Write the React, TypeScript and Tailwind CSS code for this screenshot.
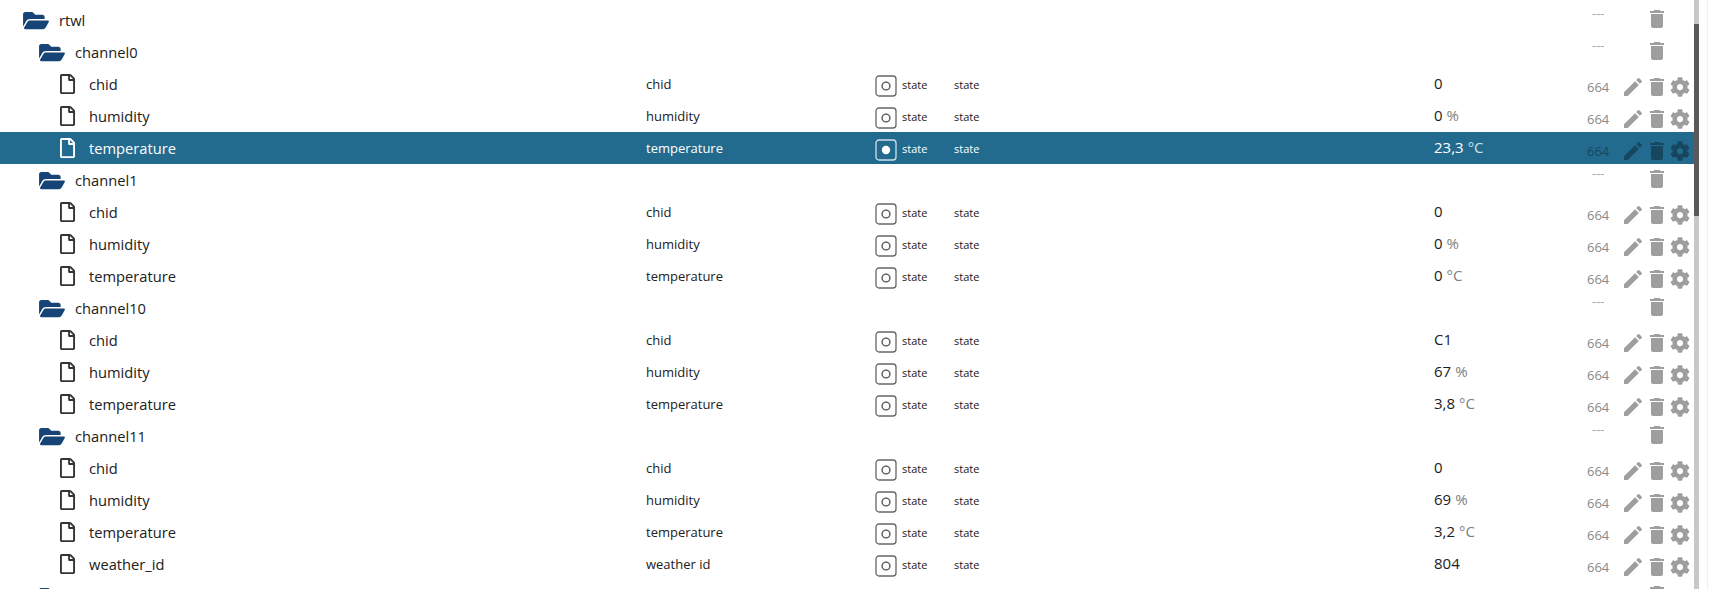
import { FaFolderOpen, FaRegFile, FaCog } from "react-icons/fa";
import { MdDelete, MdEdit } from "react-icons/md";

type Leaf = { name: string; label: string; value: string; unit?: string };

const channels: { name: string; rows: Leaf[] }[] = [
  {
    name: "channel0",
    rows: [
      { name: "chid", label: "chid", value: "0" },
      { name: "humidity", label: "humidity", value: "0", unit: "%" },
      { name: "temperature", label: "temperature", value: "23,3", unit: "°C" },
    ],
  },
  {
    name: "channel1",
    rows: [
      { name: "chid", label: "chid", value: "0" },
      { name: "humidity", label: "humidity", value: "0", unit: "%" },
      { name: "temperature", label: "temperature", value: "0", unit: "°C" },
    ],
  },
  {
    name: "channel10",
    rows: [
      { name: "chid", label: "chid", value: "C1" },
      { name: "humidity", label: "humidity", value: "67", unit: "%" },
      { name: "temperature", label: "temperature", value: "3,8", unit: "°C" },
    ],
  },
  {
    name: "channel11",
    rows: [
      { name: "chid", label: "chid", value: "0" },
      { name: "humidity", label: "humidity", value: "69", unit: "%" },
      { name: "temperature", label: "temperature", value: "3,2", unit: "°C" },
      { name: "weather_id", label: "weather id", value: "804" },
    ],
  },
];

const StateIcon = ({ active }: { active?: boolean }) => (
  <svg width="22" height="22" viewBox="0 0 22 22" className="mt-[4px] shrink-0">
    <rect
      x="1"
      y="1"
      width="20"
      height="20"
      rx="3"
      fill="none"
      stroke={active ? "#cfe0ea" : "#666666"}
      strokeWidth="1.3"
    />
    <circle
      cx="11"
      cy="11"
      r={active ? 4.2 : 3.9}
      fill={active ? "#ffffff" : "none"}
      stroke={active ? "#ffffff" : "#555555"}
      strokeWidth={active ? 0 : 1.4}
    />
  </svg>
);

// name is left out for the last row, the screenshot only shows the top of its folder
const FolderRow = ({ name, indent }: { name?: string; indent: string }) => (
  <div className={`flex h-8 items-center ${indent}`}>
    <FaFolderOpen className="h-[23px] w-[26px] shrink-0 text-[#164477]" />
    {name && <span className="ml-[10px] text-[14.7px] text-[#212121]">{name}</span>}
    <div className="ml-auto flex w-[102px] shrink-0 items-center">
      {name && <span className="mb-[13px] w-[53px] shrink-0 text-[13px] text-[#aaaaaa]">---</span>}
      <MdDelete className={`mb-[2px] h-6 w-6 shrink-0 text-[#9e9e9e] ${name ? "" : "ml-[53px]"}`} />
      <div className="w-[25px] shrink-0" />
    </div>
  </div>
);

const LeafRow = ({ row, selected }: { row: Leaf; selected?: boolean }) => {
  const text = selected ? "text-white" : "text-[#212121]";
  const icon = selected ? "text-[#17465f]" : "text-[#9e9e9e]";
  return (
    <div className={`flex h-8 items-center ${selected ? "bg-[#236b8e]" : ""}`}>
      <FaRegFile className={`ml-[60px] h-[20px] w-[15px] shrink-0 ${selected ? "text-white" : "text-[#333333]"}`} />
      <span className={`ml-[14px] w-[557px] shrink-0 text-[14.7px] ${text}`}>{row.name}</span>
      <span className={`mt-[2px] w-[229px] shrink-0 text-[13px] ${text}`}>{row.label}</span>
      <StateIcon active={selected} />
      <span className={`mt-[2px] ml-[5px] w-[52px] shrink-0 text-[11px] ${text}`}>state</span>
      <span className={`mt-[2px] w-[480px] shrink-0 text-[11px] ${text}`}>state</span>
      <span className={`mb-[2px] w-[153px] shrink-0 text-[15px] ${text}`}>
        {row.value}
        {row.unit && <span className={`ml-1 ${selected ? "text-[#cfe0ea]" : "text-[#808080]"}`}>{row.unit}</span>}
      </span>
      <span className={`mt-[8px] w-[34px] shrink-0 text-[13px] ${selected ? "text-[#17465f]" : "text-[#888888]"}`}>664</span>
      <MdEdit className={`mt-[6px] h-6 w-6 shrink-0 ${icon}`} />
      <MdDelete className={`mt-[6px] h-6 w-6 shrink-0 ${icon}`} />
      <FaCog className={`mt-[6px] ml-[1px] h-[20px] w-[20px] shrink-0 ${icon}`} />
    </div>
  );
};

export default function App() {
  return (
    <div className="flex h-[589px] overflow-hidden bg-white font-['Open_Sans','Noto_Sans',sans-serif]">
      <div className="w-[1694px] shrink-0 pt-1">
        <FolderRow name="rtwl" indent="pl-[23px]" />
        {channels.map((c) => (
          <div key={c.name}>
            <FolderRow name={c.name} indent="pl-[39px]" />
            {c.rows.map((r) => (
              <LeafRow key={r.name} row={r} selected={c.name === "channel0" && r.name === "temperature"} />
            ))}
          </div>
        ))}
        <FolderRow indent="pl-[39px]" />
      </div>
      <div className="flex w-[5px] shrink-0 flex-col bg-[#c8c8c8]">
        <div className="mt-[24px] h-[192px] bg-[#5a5a5a]" />
      </div>
      <div className="w-[8px] shrink-0" />
      <div className="w-px shrink-0 bg-[#f0f0f0]" />
    </div>
  );
}
